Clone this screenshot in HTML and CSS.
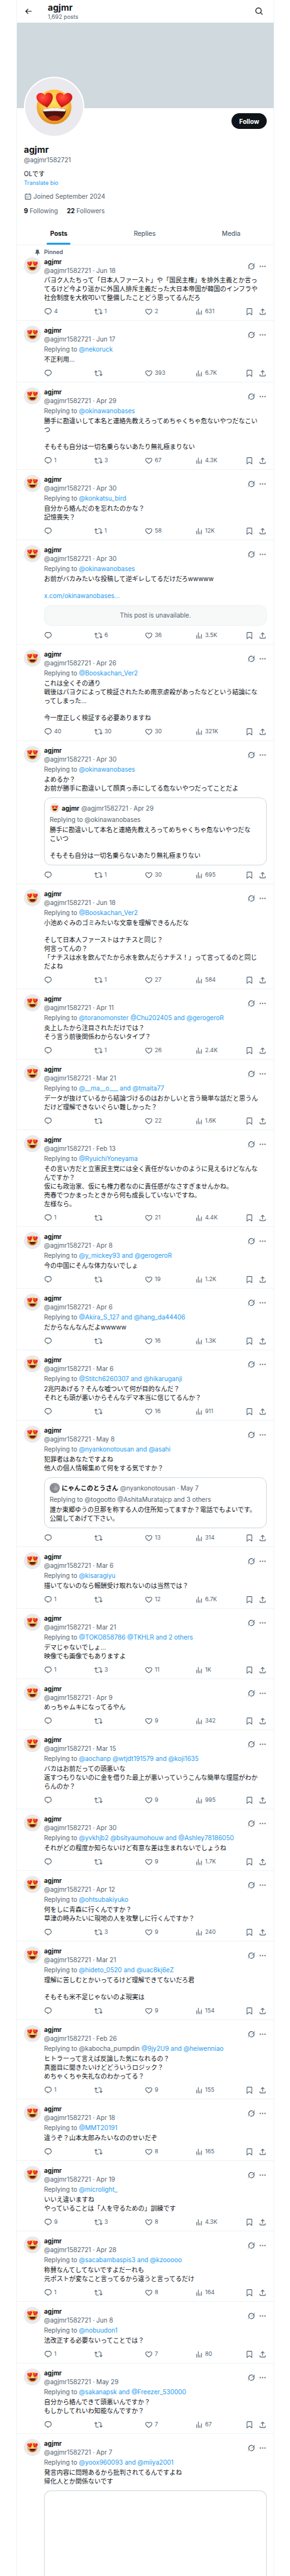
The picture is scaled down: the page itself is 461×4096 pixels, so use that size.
FILE: index.html
```
<!DOCTYPE html>
<html lang="en">
<head>
    <meta charset="UTF-8">
    <meta name="viewport" content="width=device-width, initial-scale=1.0">
    <title>agjmr (@agjmr1582721)</title>
    <link rel="stylesheet" href="styles.css">
</head>
<body>
    <svg class="sprite" aria-hidden="true">
        <defs>
            <radialGradient id="face" cx="50%" cy="35%" r="65%">
                <stop offset="0" stop-color="#ffe065"/>
                <stop offset="0.6" stop-color="#fbc13c"/>
                <stop offset="1" stop-color="#e28a1e"/>
            </radialGradient>
            <radialGradient id="love" cx="40%" cy="30%" r="70%">
                <stop offset="0" stop-color="#ff5b4a"/>
                <stop offset="0.5" stop-color="#f02a22"/>
                <stop offset="1" stop-color="#b5121b"/>
            </radialGradient>
            <radialGradient id="moon" cx="55%" cy="45%" r="60%">
                <stop offset="0" stop-color="#a5a7ac"/>
                <stop offset="0.6" stop-color="#8b8e96"/>
                <stop offset="1" stop-color="#777b86"/>
            </radialGradient>
        </defs>
        <symbol id="emoji" viewBox="0 0 100 100">
            <rect width="100" height="100" fill="#e9e9ee"/>
            <circle cx="50" cy="50" r="30" fill="url(#face)"/>
            <path d="M30 54q20-4 41 0c-1 11-9 20-20 20S32 65 30 54z" fill="#4d120f"/>
            <path d="M38 69q13-8 25 0c-4 4-8 5-12 5s-9-1-13-5z" fill="#a02413"/>
            <path d="M30 54q20-4 41 0l-2 4q-18-2-37 0z" fill="#f4f1ec"/>
            <path id="heart-eye" d="M38 51C28 46 19 40 19.500 33c.5-8 11-10 14.500-3 2-6 12-6 13.500 1C49 38 43 46 38 51z" fill="url(#love)"/>
            <path d="M63 51C58 46 52 38 53.500 31c1.500-7 11.500-7 13.500-1 3.500-7 14-5 14.500 3C82 40 73 46 63 51z" fill="url(#love)"/>
        </symbol>
        <symbol id="moon-face" viewBox="0 0 100 100">
            <rect width="100" height="100" fill="url(#moon)"/>
            <circle cx="36" cy="38" r="14" fill="#7b7f8a" opacity=".6"/>
            <circle cx="64" cy="60" r="18" fill="#b3b5ba" opacity=".6"/>
        </symbol>
        <symbol id="back" viewBox="0 0 24 24"><path d="M7.414 13l5.043 5.04-1.414 1.42L3.586 12l7.457-7.46 1.414 1.42L7.414 11H21v2H7.414z"/></symbol>
        <symbol id="search" viewBox="0 0 24 24"><path d="M10.250 3.750c-3.590 0-6.500 2.910-6.500 6.500s2.910 6.500 6.500 6.500c1.795 0 3.419-.726 4.596-1.904 1.178-1.177 1.904-2.801 1.904-4.596 0-3.590-2.910-6.500-6.500-6.500zm-8.500 6.500c0-4.694 3.806-8.500 8.500-8.500s8.500 3.806 8.500 8.500c0 1.986-.682 3.815-1.824 5.262l4.781 4.781-1.414 1.414-4.781-4.781c-1.447 1.142-3.276 1.824-5.262 1.824-4.694 0-8.500-3.806-8.500-8.500z"/></symbol>
        <symbol id="pin" viewBox="0 0 24 24"><path d="M7 4.500C7 3.120 8.120 2 9.500 2h5C15.880 2 17 3.120 17 4.500v5.260L20.120 16H13v5l-1 2-1-2v-5H3.880L7 9.760V4.500z"/></symbol>
        <symbol id="calendar" viewBox="0 0 24 24"><path d="M7 4V3h2v1h6V3h2v1h1.500C19.890 4 21 5.120 21 6.500v12c0 1.380-1.110 2.500-2.500 2.500h-13C4.120 21 3 19.880 3 18.500v-12C3 5.120 4.120 4 5.500 4H7zm0 2H5.500c-.27 0-.5.22-.5.5v12c0 .28.23.5.5.5h13c.28 0 .5-.22.5-.5v-12c0-.28-.22-.5-.5-.5H17v1h-2V6H9v1H7V6zm0 6h2v-2H7v2zm0 4h2v-2H7v2zm4-4h2v-2h-2v2zm0 4h2v-2h-2v2zm4-4h2v-2h-2v2z"/></symbol>
        <symbol id="grok" viewBox="0 0 33 32"><path d="M12.745 20.540l10.970-8.190c.539-.4 1.307-.244 1.564.38 1.349 3.288.746 7.241-1.938 9.955-2.683 2.714-6.417 3.310-9.830 1.954l-3.728 1.745c5.347 3.697 11.840 2.782 15.898-1.324 3.219-3.255 4.216-7.692 3.284-11.693l.008.009c-1.351-5.878.332-8.227 3.782-13.031L33 0l-4.540 4.590v-.014L12.743 20.544m-2.263 1.987c-3.837-3.707-3.175-9.446.1-12.755 2.420-2.449 6.388-3.448 9.852-1.979l3.720-1.737c-.67-.49-1.530-1.017-2.515-1.387-4.455-1.854-9.789-.931-13.410 2.728-3.483 3.523-4.579 8.940-2.697 13.561 1.405 3.454-.899 5.898-3.220 8.364C1.490 30.200.666 31.074 0 32l10.478-9.466"/></symbol>
        <symbol id="more" viewBox="0 0 24 24"><path d="M3 12c0-1.100.9-2 2-2s2 .9 2 2-.9 2-2 2-2-.9-2-2zm9 2c1.100 0 2-.9 2-2s-.9-2-2-2-2 .9-2 2 .9 2 2 2zm7 0c1.100 0 2-.9 2-2s-.9-2-2-2-2 .9-2 2 .9 2 2 2z"/></symbol>
        <symbol id="reply" viewBox="0 0 24 24"><path d="M1.751 10c0-4.420 3.584-8 8.005-8h4.366c4.490 0 8.129 3.640 8.129 8.130 0 2.960-1.607 5.680-4.196 7.110l-8.054 4.460v-3.690h-.067c-4.490.1-8.183-3.510-8.183-8.010zm8.005-6c-3.317 0-6.005 2.690-6.005 6 0 3.370 2.770 6.080 6.138 6.010l.351-.01h1.761v2.300l5.087-2.810c1.951-1.080 3.163-3.130 3.163-5.360 0-3.390-2.744-6.130-6.129-6.130H9.756z"/></symbol>
        <symbol id="repost" viewBox="0 0 24 24"><path d="M4.500 3.880l4.432 4.140-1.364 1.460L5.500 7.550V16c0 1.100.896 2 2 2H13v2H7.500c-2.209 0-4-1.790-4-4V7.550L1.432 9.480.068 8.020 4.500 3.880zM16.500 6H11V4h5.500c2.209 0 4 1.790 4 4v8.450l2.068-1.930 1.364 1.460-4.432 4.140-4.432-4.140 1.364-1.460 2.068 1.930V8c0-1.100-.896-2-2-2z"/></symbol>
        <symbol id="like" viewBox="0 0 24 24"><path d="M16.697 5.500c-1.222-.06-2.679.51-3.890 2.160l-.805 1.090-.806-1.090C9.984 6.010 8.526 5.440 7.304 5.500c-1.243.07-2.349.78-2.910 1.910-.552 1.120-.633 2.780.479 4.820 1.074 1.970 3.257 4.270 7.129 6.610 3.870-2.340 6.052-4.640 7.126-6.610 1.111-2.040 1.030-3.700.477-4.820-.561-1.130-1.666-1.840-2.908-1.910zm4.187 7.690c-1.351 2.480-4.001 5.120-8.379 7.670l-.503.3-.504-.3c-4.379-2.550-7.029-5.190-8.382-7.670-1.360-2.500-1.410-4.860-.514-6.670.887-1.790 2.647-2.910 4.601-3.010 1.651-.09 3.368.56 4.798 2.010 1.429-1.450 3.146-2.100 4.796-2.010 1.954.1 3.714 1.220 4.601 3.010.896 1.810.846 4.170-.514 6.670z"/></symbol>
        <symbol id="views" viewBox="0 0 24 24"><path d="M8.750 21V3h2v18h-2zM18 21V8.500h2V21h-2zM4 21l.004-10h2L6 21H4zm9.248 0v-7h2v7h-2z"/></symbol>
        <symbol id="bookmark" viewBox="0 0 24 24"><path d="M4 4.500C4 3.120 5.119 2 6.500 2h11C18.881 2 20 3.120 20 4.500v18.440l-8-5.710-8 5.710V4.500zM6.500 4c-.276 0-.5.22-.5.5v14.560l6-4.290 6 4.290V4.500c0-.28-.224-.5-.5-.5h-11z"/></symbol>
        <symbol id="share" viewBox="0 0 24 24"><path d="M12 2.590l5.700 5.700-1.410 1.420L13 6.410V16h-2V6.410l-3.300 3.300-1.410-1.420L12 2.590zM21 15l-.02 3.510c0 1.380-1.120 2.490-2.500 2.490H5.500C4.110 21 3 19.880 3 18.500V15h2v3.500c0 .28.22.5.5.5h12.980c.28 0 .5-.22.5-.5L19 15h2z"/></symbol>
    </svg>

    <main class="column">
        <header class="topbar">
            <button type="button" class="icon-btn" aria-label="Back"><svg class="icon icon-lg"><use href="#back"/></svg></button>
            <div class="topbar-title">
                <h1>agjmr</h1>
                <p>1,692 posts</p>
            </div>
            <button type="button" class="icon-btn" aria-label="Search"><svg class="icon icon-lg"><use href="#search"/></svg></button>
        </header>

        <div class="banner"></div>

        <section class="profile">
            <div class="profile-head">
                <svg class="avatar avatar-xl"><use href="#emoji"/></svg>
                <button type="button" class="follow">Follow</button>
            </div>
            <h2>agjmr</h2>
            <p class="handle">@agjmr1582721</p>
            <p class="bio">OLです</p>
            <a class="translate" href="#">Translate bio</a>
            <p class="joined"><svg class="icon"><use href="#calendar"/></svg>Joined September 2024</p>
            <p class="stats">
                <a href="#"><b>9</b> Following</a>
                <a href="#"><b>22</b> Followers</a>
            </p>
        </section>

        <nav class="tabs">
            <a class="active" href="#">Posts</a>
            <a href="#">Replies</a>
            <a href="#">Media</a>
        </nav>

        <div class="timeline" id="timeline"></div>
    </main>
    <script src="script.js"></script>
</body>
</html>
```
FILE: styles.css
```
* {
    box-sizing: border-box;
}
body {
    margin: 0;
    padding: 0 25px 0 26px;
    background-color: #fff;
    color: #0f1419;
    font-family: Inter, "Noto Sans CJK JP", sans-serif;
    font-size: 10px;
    line-height: 14px;
}
h1, h2, p {
    margin: 0;
}
a {
    color: #1d9bf0;
    text-decoration: none;
}
button {
    padding: 0;
    border: none;
    background: none;
    color: inherit;
    font: inherit;
    cursor: pointer;
}
.sprite {
    position: absolute;
    width: 0;
    height: 0;
}
.icon {
    display: block;
    flex: none;
    width: 13px;
    height: 13px;
    fill: currentColor;
}
.icon-lg {
    width: 14px;
    height: 14px;
}
.column {
    display: flex;
    flex-direction: column;
    min-height: 100vh;
    border-left: 1px solid #eff3f4;
    border-right: 1px solid #eff3f4;
}

/* top bar */
.topbar {
    display: flex;
    align-items: center;
    height: 36px;
    padding: 0 16px 0 11px;
}
.topbar-title {
    flex: 1;
    margin-left: 24px;
}
.topbar h1 {
    font-size: 14px;
    line-height: 18px;
}
.topbar p {
    color: #536471;
    font-size: 9px;
    line-height: 12px;
}

/* profile */
.banner {
    aspect-ratio: 3 / 1;
    background-color: #cfd9de;
}
.profile {
    padding: 8px 11px 11px;
}
.profile-head {
    display: flex;
    align-items: flex-start;
    justify-content: space-between;
}
.avatar {
    display: block;
    flex: none;
    width: 27px;
    height: 27px;
    border-radius: 50%;
}
.avatar-xl {
    width: 96px;
    height: 96px;
    margin-top: -58px;
    border: 2px solid #fff;
    background-color: #fff;
}
.avatar-sm {
    width: 16px;
    height: 16px;
}
.follow {
    height: 25px;
    padding: 0 12px;
    border-radius: 13px;
    background-color: #0f1419;
    color: #fff;
    font-weight: 700;
}
.profile h2 {
    margin-top: 11px;
    font-size: 14px;
    line-height: 18px;
}
.handle, .joined, .stats a {
    color: #536471;
}
.bio {
    margin-top: 8px;
}
.translate {
    display: block;
    margin-top: 1px;
    font-size: 9px;
}
.joined {
    display: flex;
    align-items: center;
    gap: 2px;
    margin-top: 7px;
}
.stats {
    display: flex;
    gap: 14px;
    margin-top: 9px;
}
.stats b {
    color: #0f1419;
}

/* tabs */
.tabs {
    display: flex;
    height: 37px;
    border-bottom: 1px solid #eff3f4;
}
.tabs a {
    flex: 1 1 auto;
    color: #536471;
    font-weight: 500;
    line-height: 36px;
    text-align: center;
}
.tabs .active {
    position: relative;
    color: #0f1419;
    font-weight: 700;
}
.tabs .active::after {
    content: "";
    position: absolute;
    bottom: 0;
    left: 50%;
    width: 38px;
    height: 3px;
    margin-left: -19px;
    border-radius: 2px;
    background-color: #1d9bf0;
}

/* timeline */
.timeline {
    display: flex;
    flex: 1;
    flex-direction: column;
}
.post {
    display: grid;
    grid-template-columns: 27px 1fr;
    column-gap: 5px;
    padding: 8px 11px 7px;
    border-bottom: 1px solid #eff3f4;
}
.post-pinned {
    padding-top: 4px;
}
.pinned {
    display: grid;
    grid-column: 1 / -1;
    grid-template-columns: 27px 1fr;
    column-gap: 5px;
    align-items: center;
    margin-bottom: 1px;
    color: #536471;
    font-size: 9px;
    font-weight: 600;
}
.pinned .icon {
    width: 11px;
    height: 11px;
    margin-left: auto;
}
.content {
    display: flex;
    flex-direction: column;
    min-width: 0;
}
.post-head {
    display: flex;
    gap: 5px;
    color: #536471;
}
.post-author {
    flex: 1;
}
.name {
    color: #0f1419;
    font-weight: 700;
}
.post-author .name {
    display: block;
}
.replying {
    margin: 2px 0 1px;
    color: #536471;
}
.mentions {
    color: #1d9bf0;
}
.text {
    margin-top: 1px;
    padding-right: 8px;
}
.text p + p {
    margin-top: 13px;
}
.unavailable {
    margin-top: 8px;
    padding: 9px;
    border: 1px solid #eff3f4;
    border-radius: 11px;
    background-color: #f7f9f9;
    color: #536471;
    line-height: 13px;
    text-align: center;
}
.quote {
    display: flex;
    flex-direction: column;
    margin-top: 8px;
    padding: 8px;
    border: 1px solid #cfd9de;
    border-radius: 11px;
}
.quote-head {
    display: flex;
    align-items: center;
    gap: 3px;
    color: #536471;
}
.quote .replying {
    margin-top: 3px;
}
.actions {
    display: flex;
    margin-top: 8px;
    color: #536471;
}
.actions button {
    display: flex;
    align-items: center;
    gap: 3px;
    height: 14px;
    font-size: 9px;
}
.actions .counted {
    flex: 1;
}
.actions .save {
    margin-right: 8px;
}

/* the last post runs on past the fold */
.post-open {
    flex: 1;
    padding-bottom: 0;
    border-bottom: none;
}
.media {
    flex: 1;
    min-height: 100px;
    margin-top: 8px;
    border: 1px solid #cfd9de;
    border-bottom: none;
    border-radius: 11px 11px 0 0;
}
```
FILE: script.js
```
// counts: replies, reposts, likes, views
const posts = [
    { pinned: true, date: 'Jun 18', text: 'パヨク人たちって「日本人ファースト」や「国民主権」を排外主義とか言ってるけど今より遥かに外国人排斥主義だった大日本帝国が韓国のインフラや社会制度を大枚叩いて整備したことどう思ってるんだろ', counts: ['4', '1', '2', '631'] },
    { date: 'Jun 17', to: '@nekoruck', text: '不正利用…', counts: ['', '', '393', '6.7K'] },
    { date: 'Apr 29', to: '@okinawanobases', text: '勝手に勘違いして本名と連絡先教えろってめちゃくちゃ危ないやつだなこいつ\n\nそもそも自分は一切名乗らないあたり無礼極まりない', counts: ['1', '3', '67', '4.3K'] },
    { date: 'Apr 30', to: '@konkatsu_bird', text: '自分から絡んだのを忘れたのかな？\n記憶喪失？', counts: ['', '1', '58', '12K'] },
    { date: 'Apr 30', to: '@okinawanobases', text: 'お前がバカみたいな投稿して逆ギレしてるだけだろwwwww\n\n<a href="#">x.com/okinawanobases…</a>', unavailable: true, counts: ['', '6', '36', '3.5K'] },
    { date: 'Apr 26', to: '@Booskachan_Ver2', text: 'これは全くその通り\n戦後はパヨクによって検証されたため南京虐殺があったなどという結論になってしまった…\n\n今一度正しく検証する必要ありますね', counts: ['40', '30', '30', '321K'] },
    {
        date: 'Apr 30', to: '@okinawanobases', text: 'よめるか？\nお前が勝手に勘違いして顔真っ赤にしてる危ないやつだってことだよ', counts: ['', '1', '30', '695'],
        quote: { avatar: 'emoji', name: 'agjmr', handle: '@agjmr1582721', date: 'Apr 29', to: '@okinawanobases', text: '勝手に勘違いして本名と連絡先教えろってめちゃくちゃ危ないやつだなこいつ\n\nそもそも自分は一切名乗らないあたり無礼極まりない' }
    },
    { date: 'Jun 18', to: '@Booskachan_Ver2', text: '小池めぐみのゴミみたいな文章を理解できるんだな\n\nそして日本人ファーストはナチスと同じ？\n何言ってんの？\n「ナチスは水を飲んでたから水を飲んだらナチス！」って言ってるのと同じだよね', counts: ['', '1', '27', '584'] },
    { date: 'Apr 11', to: '@toranomonster @Chu202405 and @gerogeroR', text: '炎上したから注目されただけでは？\nそう言う前後関係わからないタイプ？', counts: ['', '1', '26', '2.4K'] },
    { date: 'Mar 21', to: '@__ma__o___ and @tmaita77', text: 'データが抜けているから結論づけるのはおかしいと言う簡単な話だと思うんだけど理解できないぐらい難しかった？', counts: ['', '', '22', '1.6K'] },
    { date: 'Feb 13', to: '@RyuichiYoneyama', text: 'その言い方だと立憲民主党には全く責任がないかのように見えるけどなんなんですか？\n仮にも政治家、仮にも権力者なのに責任感がなさすぎませんかね。\n売春でつかまったときから何も成長していないですね。\n左様なら。', counts: ['1', '', '21', '4.4K'] },
    { date: 'Apr 8', to: '@y_mickey93 and @gerogeroR', text: '今の中国にそんな体力ないでしょ', counts: ['', '', '19', '1.2K'] },
    { date: 'Apr 6', to: '@Akira_S_127 and @hang_da44406', text: 'だからなんなんだよwwwww', counts: ['', '', '16', '1.3K'] },
    { date: 'Mar 6', to: '@Stitch6260307 and @hikaruganji', text: '2兆円あげる？そんな嘘ついて何が目的なんだ？\nそれとも頭が悪いからそんなデマ本当に信じてるんか？', counts: ['', '', '16', '911'] },
    {
        date: 'May 8', to: '@nyankonotousan and @asahi', text: '犯罪者はあなたですよね\n他人の個人情報集めて何をする気ですか？', counts: ['', '', '13', '314'],
        quote: { avatar: 'moon-face', name: 'にゃんこのとうさん', handle: '@nyankonotousan', date: 'May 7', to: '@togootto @AshitaMuratajcp and 3 others', text: '誰か東郷ゆうの旦那を称する人の住所知ってますか？電話でもよいです。公開してあげて下さい。' }
    },
    { date: 'Mar 6', to: '@kisaragiyu', text: '描いてないのなら報酬受け取れないのは当然では？', counts: ['1', '', '12', '6.7K'] },
    { date: 'Mar 21', to: '@TOKO858786 @TKHLR and 2 others', text: 'デマじゃないでしょ…\n映像でも画像でもありますよ', counts: ['1', '3', '11', '1K'] },
    { date: 'Apr 9', text: 'めっちゃムキになってるやん', counts: ['', '', '9', '342'] },
    { date: 'Mar 15', to: '@aochanp @wtjdt191579 and @koji1635', text: 'バカはお前だっての頭悪いな\n返すつもりないのに金を借りた最上が悪いっていうこんな簡単な理屈がわからんのか？', counts: ['', '', '9', '995'] },
    { date: 'Apr 30', to: '@yvkhjb2 @bsityaumohouw and @Ashley78186050', text: 'それがどの程度か知らないけど有意な差は生まれないでしょうね', counts: ['', '', '9', '1.7K'] },
    { date: 'Apr 12', to: '@ohtsubakiyuko', text: '何をしに青森に行くんですか？\n草津の時みたいに現地の人を攻撃しに行くんですか？', counts: ['', '3', '9', '240'] },
    { date: 'Mar 21', to: '@hideto_0520 and @uac8kj6eZ', text: '理解に苦しむとかいってるけど理解できてないだろ君\n\nそもそも米不足じゃないのよ現実は', counts: ['', '', '9', '154'] },
    { date: 'Feb 26', plainTo: '@kabocha_pumpdin', to: '@9jy2U9 and @heiwenniao', text: 'ヒトラーって言えば反論した気になれるの？\n真面目に聞きたいけどどういうロジック？\nめちゃくちゃ失礼なのわかってる？', counts: ['1', '', '9', '155'] },
    { date: 'Apr 18', to: '@MMT20191', text: '違うぞ？山本太郎みたいなののせいだぞ', counts: ['', '', '8', '165'] },
    { date: 'Apr 19', to: '@microlight_', text: 'いいえ違いますね\nやっていることは「人を守るための」訓練です', counts: ['9', '3', '8', '4.3K'] },
    { date: 'Apr 28', to: '@sacabambaspis3 and @kzooooo', text: '称賛なんてしてないですよだーれも\n元ポストが変なこと言ってるから違うと言ってるだけ', counts: ['1', '', '8', '164'] },
    { date: 'Jun 8', to: '@nobuudon1', text: '法改正する必要ないってことでは？', counts: ['1', '', '7', '80'] },
    { date: 'May 29', to: '@sakanapsk and @Freezer_530000', text: '自分から絡んできて頭悪いんですか？\nもしかしてれいわ知能なんですか？', counts: ['', '', '7', '67'] },
    { date: 'Apr 7', to: '@yoox960093 and @miiya2001', text: '発言内容に問題あるから批判されてるんですよね\n帰化人とか関係ないです', media: true }
];

function icon(name) {
    return `<svg class="icon"><use href="#${name}"/></svg>`;
}

function paragraphs(text) {
    const parts = text.split('\n\n').map(p => `<p>${p.replace(/\n/g, '<br>')}</p>`);
    return `<div class="text" lang="ja">${parts.join('')}</div>`;
}

function replyingTo(post) {
    if (!post.to) return '';
    const plain = post.plainTo ? post.plainTo + ' ' : '';
    const links = post.to.replace(/@\w+/g, '<a href="#">$&</a>');
    return `<div class="replying">Replying to ${plain}<span class="mentions">${links}</span></div>`;
}

function quoteBox(q) {
    return `
        <div class="quote">
            <div class="quote-head">
                <svg class="avatar avatar-sm"><use href="#${q.avatar}"/></svg>
                <span class="name">${q.name}</span>
                <span>${q.handle} · ${q.date}</span>
            </div>
            <div class="replying">Replying to ${q.to}</div>
            ${paragraphs(q.text)}
        </div>`;
}

function actionBar(counts) {
    const names = ['reply', 'repost', 'like', 'views'];
    return `
        <div class="actions">
            ${names.map((n, i) => `<button type="button" class="counted" aria-label="${n}">${icon(n)}${counts[i]}</button>`).join('')}
            <button type="button" class="save" aria-label="bookmark">${icon('bookmark')}</button>
            <button type="button" aria-label="share">${icon('share')}</button>
        </div>`;
}

document.getElementById('timeline').innerHTML = posts.map(post => `
    <article class="post${post.pinned ? ' post-pinned' : ''}${post.media ? ' post-open' : ''}">
        ${post.pinned ? `<div class="pinned">${icon('pin')}Pinned</div>` : ''}
        <svg class="avatar"><use href="#emoji"/></svg>
        <div class="content">
            <div class="post-head">
                <div class="post-author"><span class="name">agjmr</span>@agjmr1582721 · ${post.date}</div>
                <button type="button" class="icon-btn" aria-label="Explain">${icon('grok')}</button>
                <button type="button" class="icon-btn" aria-label="More">${icon('more')}</button>
            </div>
            ${replyingTo(post)}
            ${paragraphs(post.text)}
            ${post.unavailable ? '<div class="unavailable">This post is unavailable.</div>' : ''}
            ${post.quote ? quoteBox(post.quote) : ''}
            ${post.media ? '<div class="media"></div>' : ''}
            ${post.counts ? actionBar(post.counts) : ''}
        </div>
    </article>`).join('');
```
